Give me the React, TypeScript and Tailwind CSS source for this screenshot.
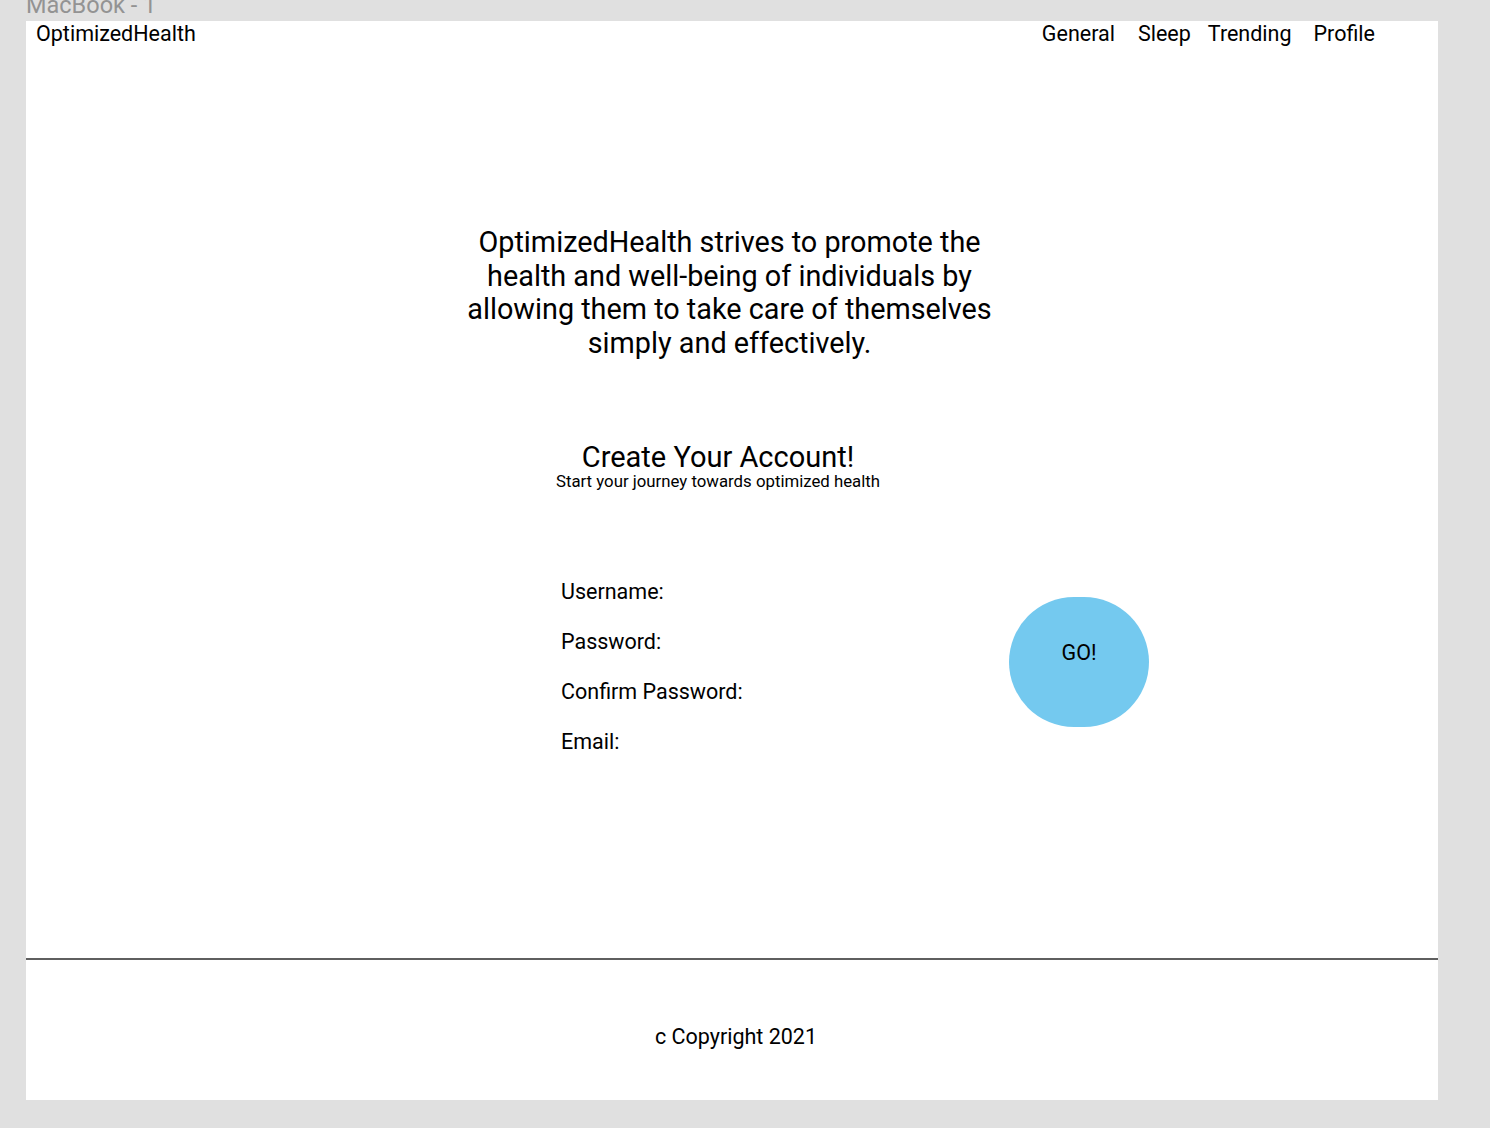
const navItems = [
  { label: 'General', className: '' },
  { label: 'Sleep', className: 'ml-[23px]' },
  { label: 'Trending', className: 'ml-[17px]' },
  { label: 'Profile', className: 'ml-[22px]' },
];

const fields = ['Username:', 'Password:', 'Confirm Password:', 'Email:'];

export default function App() {
  return (
    <div className="min-h-screen bg-[#e0e0e0] font-['Roboto',sans-serif] text-black">
      {/* frame label, cut by the top edge like in the canvas */}
      <div className="h-[21px] overflow-hidden pl-[26px]">
        <p className="-mt-[9px] text-[23.5px] leading-7 text-[#939393]">MacBook - 1</p>
      </div>

      <div className="ml-[26px] flex h-[1079px] w-[1412px] flex-col bg-white">
        {/* header */}
        <header className="flex items-start justify-between pl-[10px] pr-[63px] pt-px text-[21.5px] leading-6">
          <span>OptimizedHealth</span>
          <nav className="flex">
            {navItems.map((item) => (
              <a key={item.label} href="#" className={item.className}>
                {item.label}
              </a>
            ))}
          </nav>
        </header>

        {/* mission */}
        <p className="mt-[180px] pr-[5px] text-center text-[28.8px] leading-[33.5px]">
          OptimizedHealth strives to promote the
          <br />
          health and well-being of individuals by
          <br />
          allowing them to take care of themselves
          <br />
          simply and effectively.
        </p>

        {/* signup */}
        <div className="mt-[83px] pr-[28px] text-center">
          <h1 className="text-[29px] leading-7">Create Your Account!</h1>
          <p className="text-[16.8px] leading-5">Start your journey towards optimized health</p>
        </div>

        <form className="mt-[89px] flex pl-[535px]" onSubmit={(e) => e.preventDefault()}>
          <div className="flex w-[448px] flex-col gap-[26px] text-[21.5px] leading-6">
            {fields.map((f) => (
              <label key={f}>{f}</label>
            ))}
          </div>
          <button
            type="submit"
            className="mt-[17px] flex h-[130px] w-[140px] justify-center rounded-full bg-[#74c9ef] pt-[44px] text-[21.5px] leading-6"
          >
            GO!
          </button>
        </form>

        {/* footer */}
        <div className="mt-auto h-[2px] w-full bg-[#5f5f5f]" />
        <footer className="h-[140px] pl-[8px] pt-[65px] text-center text-[21.5px] leading-6">
          c Copyright 2021
        </footer>
      </div>
    </div>
  );
}
